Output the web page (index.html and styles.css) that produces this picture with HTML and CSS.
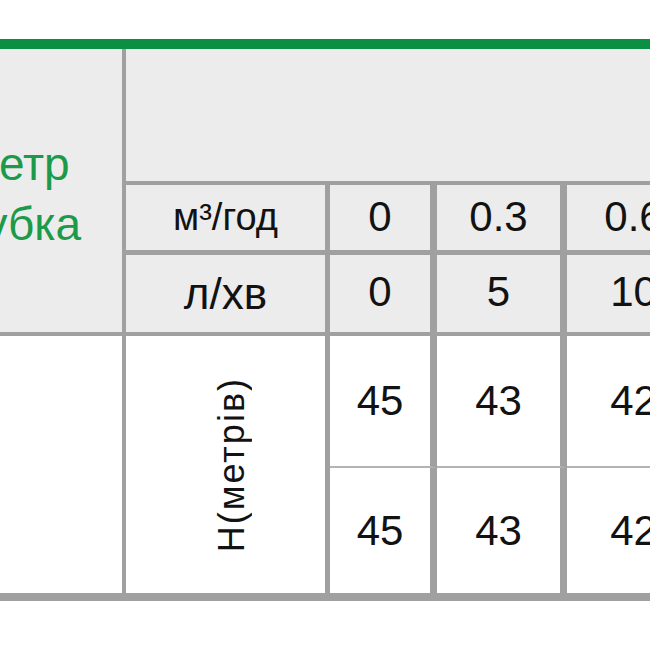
FILE: index.html
```html
<!DOCTYPE html>
<html lang="uk">
<head>
<meta charset="utf-8">
<title>Таблиця характеристик</title>
<link rel="stylesheet" href="styles.css">
</head>
<body>
<div class="sheet">
  <div class="cell diam"><span>Діаметр<br>патрубка</span></div>
  <div class="cell top"></div>

  <div class="cell head unit r1 c1"><span class="u1">м³/год</span></div>
  <div class="cell head num r1 c2">0</div>
  <div class="cell head num r1 c3">0.3</div>
  <div class="cell head num r1 c4">0.6</div>

  <div class="cell head unit r2 c1"><span class="u2">л/хв</span></div>
  <div class="cell head num r2 c2">0</div>
  <div class="cell head num r2 c3">5</div>
  <div class="cell head num r2 c4">10</div>

  <div class="cell blank"></div>
  <div class="cell hcell"><span class="vert">Н(метрів)</span></div>

  <div class="cell body num r3 c2">45</div>
  <div class="cell body num r3 c3">43</div>
  <div class="cell body num r3 c4">42</div>

  <div class="cell body num r4 c2">45</div>
  <div class="cell body num r4 c3">43</div>
  <div class="cell body num r4 c4">42</div>
</div>
</body>
</html>
```

FILE: styles.css
```css
html, body {
  margin: 0;
  padding: 0;
  background: #ffffff;
  overflow: hidden;
}

body {
  font-family: "Liberation Sans", Arial, sans-serif;
  color: #121212;
}

.sheet {
  margin-top: 39px;
  margin-left: -152px;
  width: 852px;
  display: grid;
  grid-template-columns: 278px 204px 107px 130px 133px;
  grid-template-rows: 136px 70px 81px 132px 133px;
  border-top: 10px solid #0b8f43;
}

.cell {
  box-sizing: border-box;
  display: flex;
  align-items: center;
  justify-content: center;
  border-style: solid;
  border-color: #a0a0a0;
  border-width: 0;
}

.head {
  background: #ececec;
}

.body {
  background: #ffffff;
}

.diam {
  grid-column: 1;
  grid-row: 1 / 4;
  background: #ececec;
  border-right-width: 4px;
  border-bottom-width: 4px;
  color: #1c9a4a;
  font-size: 46px;
  line-height: 60px;
  text-align: center;
  padding-top: 6px;
}

.top {
  grid-column: 2 / 6;
  grid-row: 1;
  background: #ececec;
  border-bottom-width: 4px;
}

.c1 { border-right-width: 5px; }
.c2 { border-right-width: 7px; }
.c3 { border-right-width: 7px; }
.c4 { border-right-width: 0; }

.r1 { border-bottom-width: 5px; }
.r2 { border-bottom-width: 4px; }
.r3 { border-bottom-width: 2px; border-bottom-color: #b4b4b4; }
.r4 { border-bottom-width: 8px; }

.num {
  font-size: 42px;
}

.r1.num {
  padding-bottom: 2px;
}

.r2.num {
  padding-bottom: 4px;
}

.u1 {
  font-size: 38px;
}

.u2 {
  font-size: 44px;
}

.blank {
  grid-column: 1;
  grid-row: 4 / 6;
  background: #ffffff;
  border-right-width: 4px;
  border-bottom-width: 8px;
}

.hcell {
  grid-column: 2;
  grid-row: 4 / 6;
  background: #ffffff;
  border-right-width: 5px;
  border-bottom-width: 8px;
  padding-left: 12px;
}

.vert {
  writing-mode: vertical-rl;
  transform: rotate(180deg);
  font-size: 36px;
  letter-spacing: 2px;
}
```
